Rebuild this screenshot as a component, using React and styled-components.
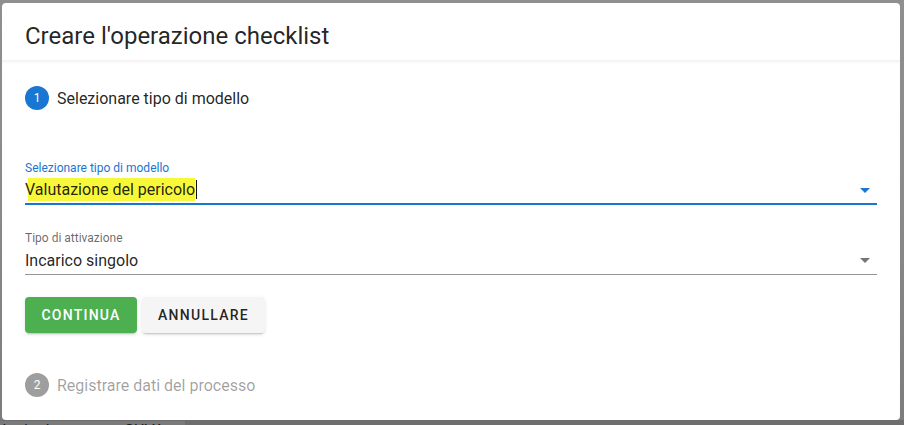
import React from "react";
import styled, { createGlobalStyle } from "styled-components";

const GlobalStyle = createGlobalStyle`
  html, body {
    margin: 0;
    padding: 0;
  }
  body {
    background: #858585;
    font-family: Roboto, "Noto Sans", "Liberation Sans", sans-serif;
    overflow: hidden;
  }
`;

const Page = styled.div`
  width: 904px;
  height: 425px;
  display: flex;
  flex-direction: column;
  background: linear-gradient(to bottom, #8f8f8f 0px, #8a8a8a 200px, #7c7c7c 425px);
  overflow: hidden;
`;

const Dialog = styled.div`
  margin: 3px 4px 0 2px;
  height: 417px;
  background: #fff;
  border-radius: 4px;
  display: flex;
  flex-direction: column;
  overflow: hidden;
  flex-shrink: 0;
`;

const Title = styled.div`
  padding: 17px 23px 8px;
  font-size: 24px;
  line-height: 32px;
  font-weight: 400;
  color: rgba(0, 0, 0, 0.87);
`;

const Stepper = styled.div`
  flex: 1;
  display: flex;
  flex-direction: column;
  padding: 0 23px;
  box-shadow: inset 0 2px 3px -1px rgba(0, 0, 0, 0.06);
  border-top: 1px solid #f3f3f3;
`;

const StepHeader = styled.div`
  display: flex;
  align-items: center;
  gap: 8px;
  margin-top: ${p => p.$top}px;
`;

const StepNumber = styled.div`
  width: 24px;
  height: 24px;
  border-radius: 50%;
  background: ${p => (p.$active ? "#1976d2" : "#9e9e9e")};
  color: #fff;
  font-size: 12px;
  display: flex;
  align-items: center;
  justify-content: center;
`;

const StepLabel = styled.div`
  font-size: 16px;
  color: ${p => (p.$active ? "rgba(0,0,0,0.87)" : "rgba(0,0,0,0.38)")};
`;

const Field = styled.div`
  margin-top: ${p => p.$top}px;
  display: flex;
  flex-direction: column;
`;

const FieldLabel = styled.div`
  font-size: 12px;
  line-height: 16px;
  height: 16px;
  color: ${p => (p.$focused ? "#1976d2" : "rgba(0,0,0,0.6)")};
`;

const ValueRow = styled.div`
  display: flex;
  align-items: center;
  height: ${p => (p.$focused ? 27 : 28)}px;
  border-bottom: ${p => (p.$focused ? "2px solid #1976d2" : "1px solid #949494")};
  font-size: 16px;
  color: rgba(0, 0, 0, 0.87);
`;

const Value = styled.div`
  flex: 1;
  display: flex;
  align-items: center;
`;

const Highlight = styled.span`
  padding: 2px 0;
  background: linear-gradient(to right, transparent 3px, #f8f83a 3px);
`;

const Caret = styled.span`
  display: inline-block;
  width: 1px;
  height: 19px;
  background: #111;
  margin-left: 1px;
`;

const Arrow = styled.svg`
  width: 24px;
  height: 24px;
  fill: ${p => (p.$focused ? "#1976d2" : "#757575")};
  flex-shrink: 0;
`;

const Actions = styled.div`
  display: flex;
  gap: 5px;
  margin-top: 22px;
`;

const Button = styled.button`
  height: 36px;
  padding: 0 16px;
  border: none;
  border-radius: 4px;
  font-family: inherit;
  font-size: 14px;
  font-weight: 500;
  letter-spacing: 1.25px;
  text-transform: uppercase;
  background: ${p => (p.$primary ? "#4caf50" : "#f5f5f5")};
  color: ${p => (p.$primary ? "#fff" : "rgba(0,0,0,0.87)")};
  box-shadow: 0 3px 1px -2px rgba(0, 0, 0, 0.12), 0 2px 2px 0 rgba(0, 0, 0, 0.08),
    0 1px 5px 0 rgba(0, 0, 0, 0.06);
`;

const PrimaryButton = styled(Button)`
  width: 112px;
`;

const SecondaryButton = styled(Button)`
  width: 123px;
`;

const Behind = styled.div`
  height: 5px;
  margin-left: -3px;
  font-size: 16px;
  line-height: 22px;
  color: #1a1a1a;
  background: #6e6e6e;
  overflow: hidden;
  white-space: nowrap;
`;

const BehindText = styled.span`
  background: #7a7a7a;
  padding-right: 20px;
`;

const MenuDown = ({ focused }) => (
  <Arrow viewBox="0 0 24 24" $focused={focused}>
    <path d="M7 10l5 5 5-5z" />
  </Arrow>
);

const SelectField = ({ label, value, focused, top, children }) => (
  <Field $top={top}>
    <FieldLabel $focused={focused}>{label}</FieldLabel>
    <ValueRow $focused={focused}>
      <Value>{children || value}</Value>
      <MenuDown focused={focused} />
    </ValueRow>
  </Field>
);

export default function App() {
  return (
    <>
      <GlobalStyle />
      <Page>
        <Dialog>
          <Title>Creare l'operazione checklist</Title>
          <Stepper>
            <StepHeader $top={25}>
              <StepNumber $active>1</StepNumber>
              <StepLabel $active>Selezionare tipo di modello</StepLabel>
            </StepHeader>
            <SelectField label="Selezionare tipo di modello" focused top={50}>
              <Highlight>Valutazione del pericolo</Highlight>
              <Caret />
            </SelectField>
            <SelectField
              label="Tipo di attivazione"
              value="Incarico singolo"
              top={25}
            />
            <Actions>
              <PrimaryButton $primary>Continua</PrimaryButton>
              <SecondaryButton>Annullare</SecondaryButton>
            </Actions>
            <StepHeader $top={40}>
              <StepNumber>2</StepNumber>
              <StepLabel>Registrare dati del processo</StepLabel>
            </StepHeader>
          </Stepper>
        </Dialog>
        <Behind>
          <BehindText>rketingkampagne SUVA</BehindText>
        </Behind>
      </Page>
    </>
  );
}
